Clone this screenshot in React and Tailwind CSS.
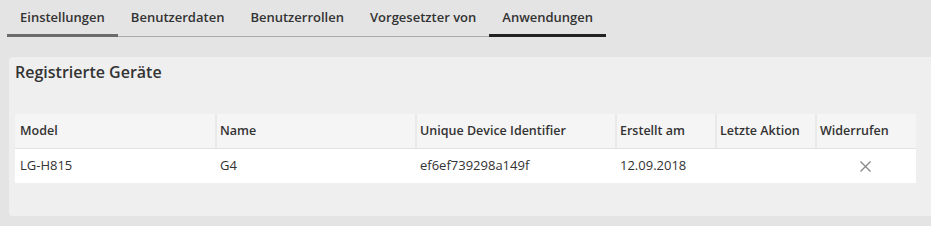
const tabs = [
  { label: 'Einstellungen', state: 'hover' },
  { label: 'Benutzerdaten' },
  { label: 'Benutzerrollen' },
  { label: 'Vorgesetzter von' },
  { label: 'Anwendungen', state: 'active' },
];

const columns = [
  { title: 'Model', width: 'w-[200px]' },
  { title: 'Name', width: 'w-[200px]' },
  { title: 'Unique Device Identifier', width: 'w-[200px]' },
  { title: 'Erstellt am', width: 'w-[100px]' },
  { title: 'Letzte Aktion', width: 'w-[100px]' },
  { title: 'Widerrufen', width: 'w-[101px]' },
];

const devices = [
  { model: 'LG-H815', name: 'G4', udid: 'ef6ef739298a149f', created: '12.09.2018', last: '' },
];

function CloseIcon() {
  return (
    <svg width="11" height="11" viewBox="0 0 11 11" className="block">
      <path d="M0.5 0.5 L10.5 10.5 M10.5 0.5 L0.5 10.5" stroke="#8a8a8a" strokeWidth="1.4" fill="none" />
    </svg>
  );
}

export default function App() {
  return (
    <div className="w-[931px] h-[226px] bg-[#e4e4e4] overflow-hidden text-[#333] font-['Open_Sans',sans-serif]">
      <div className="ml-[7px] flex w-fit border-b border-[#aaaaaa]">
        {tabs.map(t => (
          <div
            key={t.label}
            className={
              'px-[13px] pt-[7px] pb-[7px] -mb-px border-b-[3px] text-[13px] leading-[20px] font-semibold ' +
              (t.state === 'active'
                ? 'border-[#222222]'
                : t.state === 'hover'
                ? 'border-[#6b6b6b]'
                : 'border-transparent')
            }
          >
            {t.label}
          </div>
        ))}
      </div>

      <div className="mt-[20px] ml-[9px] h-[159px] bg-[#efefef] rounded-l-[4px] pl-[6px] pt-[4px]">
        <h2 className="text-[16px] leading-[22px] font-semibold">Registrierte Geräte</h2>

        <div className="mt-[31px] w-[901px]">
          <div className="flex bg-[#f5f5f5] border-b border-[#e2e2e2] h-[35px]">
            {columns.map((c, i) => (
              <div
                key={c.title}
                className={
                  c.width +
                  ' flex items-center text-[12.5px] font-semibold ' +
                  (i > 0 ? 'border-l-2 border-[#e9e9e9] pl-[3px] pr-[5px]' : 'px-[5px]')
                }
              >
                {c.title}
              </div>
            ))}
          </div>
          {devices.map(d => (
            <div key={d.udid} className="flex bg-white h-[34px] text-[13px]">
              <div className="w-[200px] flex items-center px-[5px]">{d.model}</div>
              <div className="w-[200px] flex items-center px-[5px]">{d.name}</div>
              <div className="w-[200px] flex items-center px-[5px]">{d.udid}</div>
              <div className="w-[100px] flex items-center px-[5px]">{d.created}</div>
              <div className="w-[100px] flex items-center px-[5px]">{d.last}</div>
              <div className="w-[101px] flex items-center justify-center">
                <button className="p-0">
                  <CloseIcon />
                </button>
              </div>
            </div>
          ))}
        </div>
      </div>
    </div>
  );
}
